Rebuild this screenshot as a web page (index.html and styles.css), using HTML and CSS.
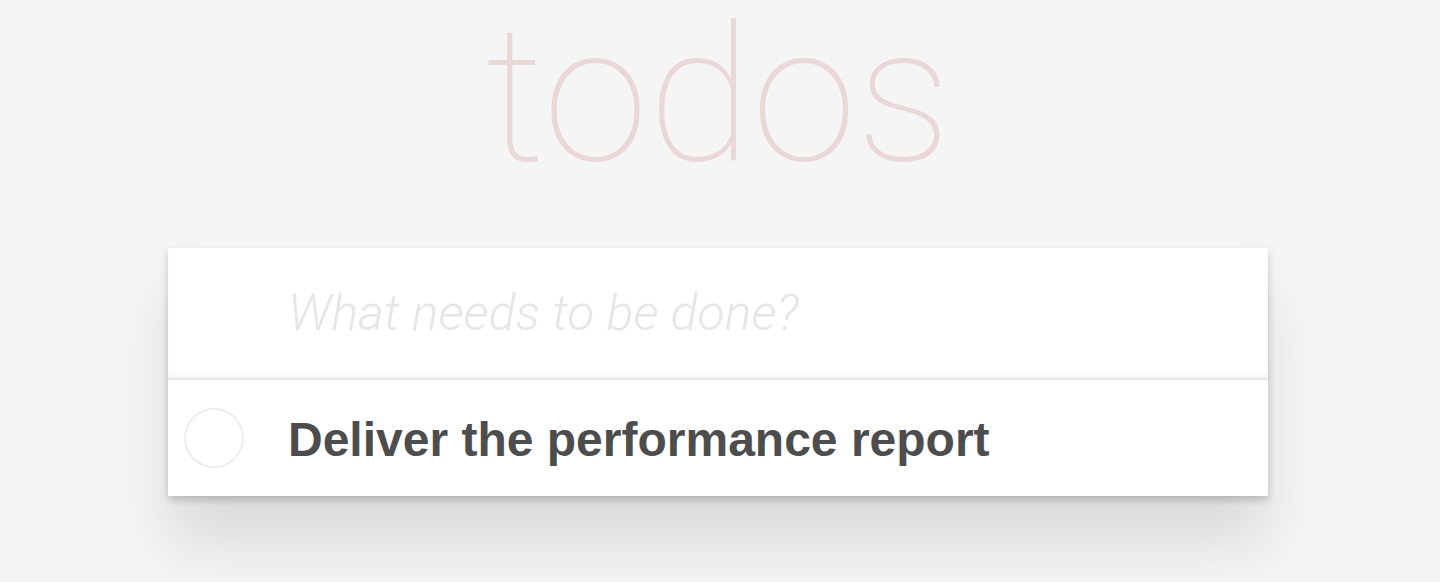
FILE: index.html
```html
<!DOCTYPE html>
<html lang="en">
<head>
<meta charset="utf-8">
<title>Todos</title>
<link rel="stylesheet" href="styles.css">
</head>
<body>
<main class="todoapp">
  <h1 class="title">todos</h1>
  <section class="card">
    <input class="new-todo" type="text" placeholder="What needs to be done?" aria-label="New todo">
    <ul class="todo-list">
      <li class="todo">
        <input class="toggle" type="checkbox" id="todo-1">
        <label class="todo-label" for="todo-1">Deliver the performance report</label>
      </li>
    </ul>
  </section>
</main>
</body>
</html>
```

FILE: styles.css
```css
* {
  box-sizing: border-box;
}

body {
  margin: 0;
  padding: 0 4px 80px 0;
  background: #f5f5f5;
  color: #4d4d4d;
  font-family: "Liberation Sans", Arial, sans-serif;
}

.todoapp {
  max-width: 1100px;
  margin: 0 auto;
}

.title {
  margin: 0;
  padding-bottom: 58px;
  color: #ead7d7;
  font-family: Roboto, sans-serif;
  font-size: 190px;
  font-weight: 100;
  line-height: 190px;
  text-align: center;
}

.card {
  background: #fff;
  box-shadow: 0 4px 8px 0 rgba(0, 0, 0, 0.2), 0 50px 56px 0 rgba(0, 0, 0, 0.1);
}

.new-todo {
  display: block;
  width: 100%;
  height: 130px;
  padding: 0 32px 0 120px;
  border: 0;
  outline: 0;
  background: transparent;
  box-shadow: inset 0 -4px 4px 0 rgba(0, 0, 0, 0.03);
  color: inherit;
  font-family: Roboto, sans-serif;
  font-size: 50px;
  font-weight: 300;
}

.new-todo::placeholder {
  color: #e6e6e6;
  font-style: italic;
  opacity: 1;
}

.todo-list {
  margin: 0;
  padding: 0;
  border-top: 2px solid #e6e6e6;
  list-style: none;
}

.todo {
  display: flex;
  align-items: center;
  gap: 44px;
  min-height: 116px;
  padding: 0 32px 0 16px;
}

.toggle {
  flex: none;
  width: 60px;
  height: 60px;
  margin: 0;
  border: 2px solid #ededed;
  border-radius: 50%;
  appearance: none;
}

.todo-label {
  padding-top: 4px;
  font-size: 48px;
  font-weight: 700;
  line-height: 56px;
}
```
